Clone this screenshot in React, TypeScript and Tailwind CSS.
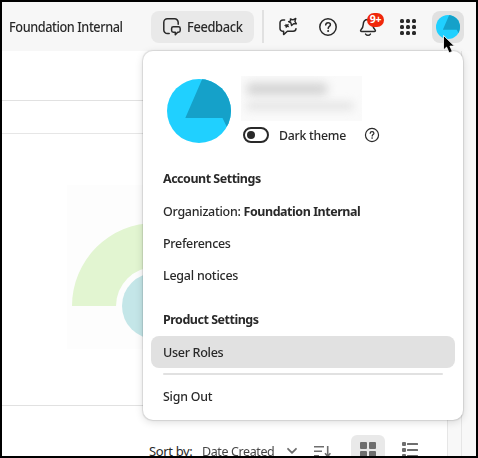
import React from "react";

function Avatar({ className }: { className: string }) {
  return (
    <svg viewBox="0 0 64 64" className={className}>
      <defs>
        <clipPath id="avatarClip">
          <circle cx="32" cy="32" r="32" />
        </clipPath>
      </defs>
      <g clipPath="url(#avatarClip)">
        <rect width="64" height="64" fill="#20d0ff" />
        <path d="M35.2 0 18.3 39h37.2l5.3 11H64V0z" fill="#15a1c9" />
      </g>
    </svg>
  );
}

function HelpIcon({ className }: { className: string }) {
  return (
    <svg viewBox="0 0 20 20" fill="none" stroke="#292929" className={className}>
      <circle cx="10" cy="10" r="8.2" strokeWidth="1.5" />
      <path d="M7.7 7.9c.1-1.4 1.1-2.2 2.4-2.2s2.3.8 2.3 2c0 1.7-2.2 1.8-2.2 3.7" strokeWidth="1.5" strokeLinecap="round" />
      <circle cx="10.1" cy="13.9" r="1" fill="#292929" stroke="none" />
    </svg>
  );
}

function FeedbackIcon() {
  return (
    <svg viewBox="0 0 20 20" fill="none" stroke="#292929" strokeWidth="1.5" strokeLinejoin="round" strokeLinecap="round" className="size-5">
      <path d="M7.2 16.6H5.4a3.6 3.6 0 0 1-3.6-3.6V5.4a3.6 3.6 0 0 1 3.6-3.6h7.2A3.6 3.6 0 0 1 16.2 5.4v1.8" />
      <path d="M11.3 9.8h5.2c1 0 1.7.7 1.7 1.7v2.1c0 1-.7 1.7-1.7 1.7h-.8l-2.4 2.5v-2.5h-2c-1 0-1.7-.7-1.7-1.7v-2.1c0-1 .7-1.7 1.7-1.7z" />
    </svg>
  );
}

function AssistantIcon() {
  return (
    <svg viewBox="0 0 20 20" fill="none" className="size-5">
      <path
        d="M6.6 2.900H4.900a2.900 2.900 0 0 0-2.900 2.900v5.600a2.900 2.900 0 0 0 2.900 2.900h.7v3.300l3.800-3.300h5.700a2.900 2.900 0 0 0 2.900-2.600"
        stroke="#292929"
        strokeWidth="1.5"
        strokeLinecap="round"
        strokeLinejoin="round"
      />
      <path d="m12.400 1.900 2.500.9 2.900-1.300-.9 2.800 1.500 2.500-2.800-.1-2 1.800-.7-2.600-2.300-1.300 2.100-.8z" stroke="#292929" strokeWidth="1.4" strokeLinejoin="round" />
      <path d="m7.300 6.700 1.700.7 1.900-.7-.6 1.800 1 1.700-1.900-.1-1.500 1.200-.4-1.800-1.600-1 1.700-.500z" fill="#292929" />
    </svg>
  );
}

function BellIcon() {
  return (
    <svg viewBox="0 0 20 20" fill="none" stroke="#292929" strokeWidth="1.5" strokeLinejoin="round" strokeLinecap="round" className="size-5">
      <path d="M10 2.500c-2.900 0-4.700 2.200-4.800 5.200-.1 2.700-.7 3.500-2.200 5-.8.800-.4 1.900.8 1.900h12.400c1.200 0 1.600-1.100.8-1.900-1.500-1.500-2.100-2.300-2.200-5C14.700 4.700 12.900 2.500 10 2.500z" />
      <path d="M7.600 17.100c.600.800 1.400 1.200 2.400 1.200s1.800-.4 2.400-1.200" />
    </svg>
  );
}

function AppsIcon() {
  return (
    <div className="grid grid-cols-3 gap-[2px]">
      {Array.from({ length: 9 }, (_, i) => (
        <span key={i} className="size-1 rounded-[1.5px] bg-[#292929]" />
      ))}
    </div>
  );
}

function Header() {
  return (
    <header className="flex h-[49px] shrink-0 items-center bg-[#f7f7f7] pl-[7px]">
      <span className="w-[142px] pt-px text-[13.5px] font-medium">
        <span className="inline-block origin-left scale-x-[0.942] whitespace-nowrap tracking-[-0.45px]">Foundation Internal</span>
      </span>
      <button className="flex h-8 w-[103px] items-center rounded-lg bg-[#e9e9e9] pl-[11px]">
        <FeedbackIcon />
        <span className="ml-[5px] inline-block origin-left scale-x-[0.955] pt-px text-[13.5px] font-medium tracking-[-0.4px]">Feedback</span>
      </button>
      <span className="ml-2 h-[33px] w-[2px] bg-[#e1e1e1]" />
      <span className="ml-[14px]"><AssistantIcon /></span>
      <span className="ml-5"><HelpIcon className="size-5" /></span>
      <span className="relative ml-5">
        <BellIcon />
        <span className="absolute left-[9px] top-[-4px] flex h-[14px] w-[17px] items-center justify-center rounded-full bg-[#f0270b] text-[10.5px] font-bold tracking-[-0.3px] text-white">9+</span>
      </span>
      <span className="ml-[22px]"><AppsIcon /></span>
      <button className="ml-4 flex size-8 items-center justify-center rounded-lg bg-[#e1e1e1]">
        <Avatar className="size-6" />
      </button>
    </header>
  );
}

function Page() {
  return (
    <div className="flex min-h-0 flex-1">
      <main className="flex w-[445px] shrink-0 flex-col">
        <div className="h-[50px] shrink-0 border-b border-[#e1e1e1]" />
        <div className="h-[33px] shrink-0 border-b border-[#e6e6e6]" />
        <div className="h-[272px] shrink-0 border-b border-[#e1e1e1] pl-[65px] pt-[51px]">
          <svg width="176" height="164" viewBox="67 185 176 164">
            <rect x="67" y="185" width="176" height="164" fill="#fdfdfd" />
            <path d="M72 306a83 83 0 0 1 166 0h-44a39 39 0 0 0-78 0z" fill="#e2f5d1" />
            <circle cx="155" cy="306" r="33" fill="#c4e6e8" />
          </svg>
        </div>
        <div className="flex h-[50px] shrink-0 pl-[147px] pt-[29px]">
          <span className="w-[53px] pt-[6px] text-[13px] leading-[20px] tracking-[-0.35px]">Sort by:</span>
          <span className="w-[82px] origin-left scale-x-[0.96] whitespace-nowrap pt-[6px] text-[13px] leading-[20px] tracking-[-0.4px] text-[#464646]">Date Created</span>
          <svg className="mt-[11px] h-[10px] w-[16px]" viewBox="0 0 16 10" fill="none" stroke="#6e6e6e" strokeWidth="1.8" strokeLinecap="round" strokeLinejoin="round">
            <path d="m4 2.800 4 4 4-4" />
          </svg>
          <svg className="ml-[13px] mt-[9px] h-[18px] w-[18px]" viewBox="0 0 18 18" fill="none" stroke="#6e6e6e" strokeWidth="1.6">
            <path d="M1 2.700h10M1 7.300h8M1 11.900h5" />
            <path d="M14.700 2v9.500M12 9.300l2.700 3 2.700-3" />
          </svg>
          <span className="ml-5 flex h-8 w-[34px] justify-center rounded-md bg-[#e9e9e9] pt-[7px]">
            <span className="grid h-4 grid-cols-2 gap-[2px]">
              {[0, 1, 2, 3].map((i) => (
                <span key={i} className="size-[7px] rounded-[1px] bg-[#6e6e6e]" />
              ))}
            </span>
          </span>
          <svg className="ml-[17px] mt-[7px] h-[18px] w-4" viewBox="0 0 16 18" fill="#6e6e6e">
            {[0, 6, 12].map((y) => (
              <g key={y}>
                <rect x="0" y={y} width="4" height="4" rx="1" />
                <rect x="5" y={y + 1} width="11" height="2" rx=".5" />
              </g>
            ))}
          </svg>
        </div>
      </main>
      <div className="w-[15px] shrink-0 border-x border-[#e6e6e6] bg-[#f8f8f8]" />
      <div className="flex-1 bg-[#f8f8f8]" />
    </div>
  );
}

function AccountMenu() {
  return (
    <div className="absolute left-[141px] top-[49px] h-[369px] w-[320px] rounded-[10px] bg-white px-2 pt-7 text-[13px] font-medium leading-8 shadow-[0_0_1px_0.5px_rgba(0,0,0,0.1),0_2px_9px_rgba(0,0,0,0.14)]">
      <div className="flex h-[83px] pl-4">
        <Avatar className="size-16" />
        <div className="ml-[10px] mt-[-3px]">
          <div className="h-[45px] w-[121px] overflow-hidden bg-[#fafafa] pl-[5px] pt-[7px]">
            <div className="h-3 w-[82px] rounded-full bg-[#d3d3d3] blur-[5px]" />
            <div className="mt-[7px] h-2 w-[108px] rounded-full bg-[#e3e3e3] blur-[4px]" />
          </div>
          <div className="mt-[6px] flex h-4 items-center pl-[2px]">
            <span className="flex h-4 w-[26px] items-center rounded-full border-2 border-[#292929] pl-[2px]">
              <span className="size-2 rounded-full bg-[#292929]" />
            </span>
            <span className="ml-[10px] w-[85px] origin-left scale-x-[0.945] whitespace-nowrap tracking-[-0.25px]">Dark theme</span>
            <HelpIcon className="size-4" />
          </div>
        </div>
      </div>
      <div className="origin-left scale-x-[0.96] pl-[12.5px]">
        <h2 className="h-[33px] font-bold tracking-[-0.5px]">Account Settings</h2>
        <p className="whitespace-nowrap tracking-[-0.28px]">Organization: <b className="tracking-[-0.47px]">Foundation Internal</b></p>
        <p className="tracking-[-0.3px]">Preferences</p>
        <p className="tracking-[-0.25px]">Legal notices</p>
        <h2 className="mt-3 h-[33px] font-bold tracking-[-0.5px]">Product Settings</h2>
      </div>
      <div className="h-8 rounded-lg bg-[#e1e1e1] pl-3">
        <span className="inline-block origin-left scale-x-[0.97] tracking-[-0.35px]">User Roles</span>
      </div>
      <div className="mx-3 mt-[5px] h-[2px] rounded-full bg-[#e1e1e1]" />
      <div className="mt-[5px] pl-3">
        <span className="inline-block origin-left scale-x-[0.95] tracking-[-0.2px]">Sign Out</span>
      </div>
    </div>
  );
}

export default function App() {
  return (
    <div className="relative flex h-[458px] w-[478px] flex-col overflow-hidden border-2 border-black bg-white font-['Noto_Sans',sans-serif] text-[#292929]">
      <Header />
      <Page />
      <AccountMenu />
      <svg className="absolute left-[440px] top-[32px] h-[20px] w-[13px]" viewBox="0 0 13 20">
        <path d="M1.500 1.500v14.500l3.100-2.900 2.500 5.700 3.200-1.300-2.400-5.400h4.500z" fill="#000" stroke="#fff" strokeWidth=".8" />
      </svg>
    </div>
  );
}
